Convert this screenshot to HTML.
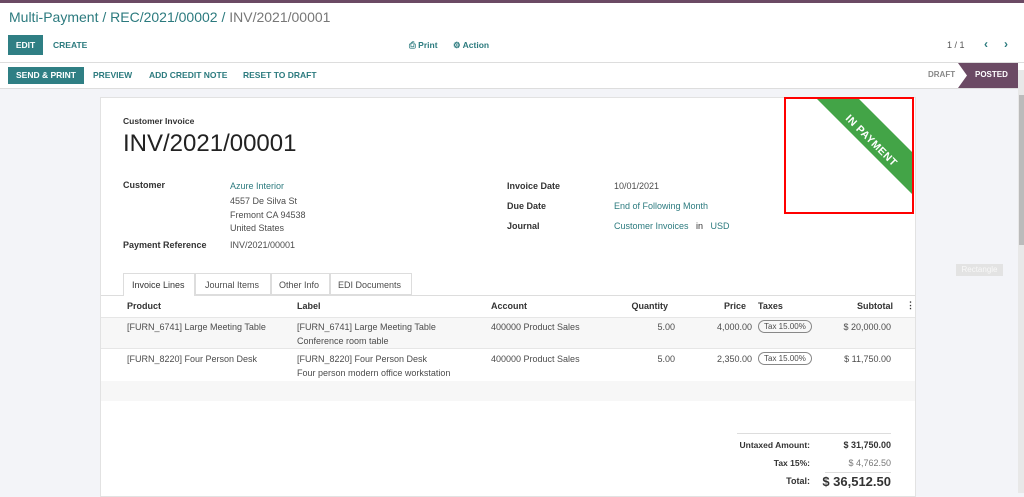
<!DOCTYPE html>
<html><head><meta charset="utf-8"><style>
*{margin:0;padding:0;box-sizing:border-box}
body{width:1024px;height:493px;overflow:hidden;position:relative;background:#f3f4f8;font-family:"Liberation Sans",sans-serif;font-size:9px;color:#4c4c4c}
.a{position:absolute;white-space:nowrap}
.b{font-weight:bold;color:#333}
.t{color:#2b7a7e}
.btn{position:absolute;background:#2f7f84;color:#fff;font-weight:bold;font-size:8.5px;text-align:center}
.lk{color:#2b7a7e;font-weight:bold;font-size:8.5px}
.r{text-align:right}
.tag{border:1px solid #888;border-radius:8px;padding:0 5px;font-size:8px;line-height:11px}
</style></head><body>
<div class="a" style="left:0;top:0;width:1024px;height:88px;background:#fff"></div>
<div class="a" style="left:0;top:0;width:1024px;height:3px;background:#6b4a64"></div>
<div class="a" style="left:9px;top:9px;font-size:14px;color:#2b7a7e">Multi-Payment / REC/2021/00002 / <span style="color:#777">INV/2021/00001</span></div>
<div class="btn" style="left:8px;top:35px;width:35px;height:20px;line-height:20px">EDIT</div>
<div class="a lk" style="left:53px;top:40px">CREATE</div>
<div class="a lk" style="left:409px;top:40px">&#9113; Print</div>
<div class="a lk" style="left:453px;top:40px">&#9881; Action</div>
<div class="a" style="left:947px;top:40px;color:#555">1 / 1</div>
<div class="a lk" style="left:984px;top:37px;font-size:12px">&#8249;</div>
<div class="a lk" style="left:1004px;top:37px;font-size:12px">&#8250;</div>
<div class="a" style="left:0;top:62px;width:1024px;height:1px;background:#ddd"></div>
<div class="btn" style="left:8px;top:67px;width:76px;height:17px;line-height:17px">SEND &amp; PRINT</div>
<div class="a lk" style="left:93px;top:70px">PREVIEW</div>
<div class="a lk" style="left:149px;top:70px">ADD CREDIT NOTE</div>
<div class="a lk" style="left:243px;top:70px">RESET TO DRAFT</div>
<div class="a" style="left:928px;top:70px;font-size:8px;font-weight:bold;color:#888">DRAFT</div>
<svg class="a" style="left:958px;top:63px" width="60" height="25"><polygon points="0,0 60,0 60,25 0,25 9,12.5" fill="#6b4a64"/></svg>
<div class="a" style="left:975px;top:70px;font-size:8px;font-weight:bold;color:#fff">POSTED</div>
<div class="a" style="left:0;top:88px;width:1024px;height:1px;background:#ddd"></div>
<div class="a" style="left:1018px;top:70px;width:6px;height:423px;background:#e8e8e8"></div>
<div class="a" style="left:1019px;top:95px;width:5px;height:150px;background:#bbb"></div>
<div class="a" style="left:100px;top:97px;width:816px;height:400px;background:#fff;border:1px solid #e2e2e2"></div>
<div class="a b" style="left:123px;top:116px;font-size:8.5px">Customer Invoice</div>
<div class="a" style="left:123px;top:130px;font-size:24px;color:#222">INV/2021/00001</div>
<div class="a b" style="left:123px;top:180px">Customer</div>
<div class="a t" style="left:230px;top:181px">Azure Interior</div>
<div class="a" style="left:230px;top:196px">4557 De Silva St</div>
<div class="a" style="left:230px;top:210px">Fremont CA 94538</div>
<div class="a" style="left:230px;top:223px">United States</div>
<div class="a b" style="left:123px;top:240px">Payment Reference</div>
<div class="a" style="left:230px;top:240px">INV/2021/00001</div>
<div class="a b" style="left:507px;top:181px">Invoice Date</div>
<div class="a" style="left:614px;top:181px">10/01/2021</div>
<div class="a b" style="left:507px;top:201px">Due Date</div>
<div class="a t" style="left:614px;top:201px">End of Following Month</div>
<div class="a b" style="left:507px;top:221px">Journal</div>
<div class="a t" style="left:614px;top:221px">Customer Invoices &nbsp; <span style="color:#333">in</span> &nbsp; USD</div>
<div class="a" style="left:784px;top:97px;width:130px;height:117px;border:2px solid #f00;overflow:hidden">
<svg width="130" height="117" style="position:absolute;left:-2px;top:-2px"><polygon points="32,1 74,1 128,55 128,97" fill="#43a447"/>
<text x="0" y="0" transform="translate(87,44) rotate(45)" text-anchor="middle" font-family="Liberation Sans" font-size="10.5" font-weight="bold" letter-spacing="0.5" fill="#fff" dominant-baseline="middle">IN PAYMENT</text></svg></div>
<div class="a" style="left:956px;top:264px;width:47px;height:12px;background:#e3e3e3;color:#f8f8f8;font-size:8px;text-align:center;line-height:12px">Rectangle</div>
<div class="a" style="left:101px;top:295px;width:814px;height:1px;background:#ddd"></div>
<div class="a" style="left:123px;top:273px;width:72px;height:23px;background:#fff;border:1px solid #ddd;border-bottom:none"></div>
<div class="a" style="left:195px;top:273px;width:76px;height:22px;border:1px solid #ddd"></div>
<div class="a" style="left:271px;top:273px;width:59px;height:22px;border:1px solid #ddd"></div>
<div class="a" style="left:330px;top:273px;width:82px;height:22px;border:1px solid #ddd"></div>
<div class="a" style="left:132px;top:280px;color:#333">Invoice Lines</div>
<div class="a" style="left:205px;top:280px">Journal Items</div>
<div class="a" style="left:279px;top:280px">Other Info</div>
<div class="a" style="left:338px;top:280px">EDI Documents</div>
<div class="a b" style="left:127px;top:301px">Product</div>
<div class="a b" style="left:297px;top:301px">Label</div>
<div class="a b" style="left:491px;top:301px">Account</div>
<div class="a b r" style="left:620px;top:301px;width:48px">Quantity</div>
<div class="a b r" style="left:700px;top:301px;width:46px">Price</div>
<div class="a b" style="left:758px;top:301px">Taxes</div>
<div class="a b r" style="left:840px;top:301px;width:53px">Subtotal</div>
<div class="a b" style="left:906px;top:300px">&#8942;</div>
<div class="a" style="left:101px;top:317px;width:814px;height:32px;background:#f7f7f7;border-top:1px solid #e6e6e6;border-bottom:1px solid #e6e6e6"></div>
<div class="a" style="left:127px;top:322px">[FURN_6741] Large Meeting Table</div>
<div class="a" style="left:297px;top:322px">[FURN_6741] Large Meeting Table</div>
<div class="a" style="left:297px;top:336px">Conference room table</div>
<div class="a" style="left:491px;top:322px">400000 Product Sales</div>
<div class="a r" style="left:620px;top:322px;width:55px">5.00</div>
<div class="a r" style="left:690px;top:322px;width:62px">4,000.00</div>
<div class="a tag" style="left:758px;top:320px">Tax 15.00%</div>
<div class="a r" style="left:830px;top:322px;width:61px">$ 20,000.00</div>
<div class="a" style="left:127px;top:354px">[FURN_8220] Four Person Desk</div>
<div class="a" style="left:297px;top:354px">[FURN_8220] Four Person Desk</div>
<div class="a" style="left:297px;top:368px">Four person modern office workstation</div>
<div class="a" style="left:491px;top:354px">400000 Product Sales</div>
<div class="a r" style="left:620px;top:354px;width:55px">5.00</div>
<div class="a r" style="left:690px;top:354px;width:62px">2,350.00</div>
<div class="a tag" style="left:758px;top:352px">Tax 15.00%</div>
<div class="a r" style="left:830px;top:354px;width:61px">$ 11,750.00</div>
<div class="a" style="left:101px;top:381px;width:814px;height:20px;background:#f7f7f7"></div>
<div class="a" style="left:737px;top:433px;width:154px;height:1px;background:#ddd"></div>
<div class="a b r" style="left:700px;top:440px;width:110px;font-size:8.5px">Untaxed Amount:</div>
<div class="a b r" style="left:820px;top:440px;width:71px;font-size:9px">$ 31,750.00</div>
<div class="a b r" style="left:700px;top:458px;width:110px;font-size:8.5px">Tax 15%:</div>
<div class="a r" style="left:820px;top:458px;width:71px;color:#777">$ 4,762.50</div>
<div class="a" style="left:825px;top:472px;width:66px;height:1px;background:#ddd"></div>
<div class="a b r" style="left:700px;top:476px;width:110px;font-size:9px">Total:</div>
<div class="a b r" style="left:800px;top:474px;width:91px;font-size:13px">$ 36,512.50</div>
</body></html>
